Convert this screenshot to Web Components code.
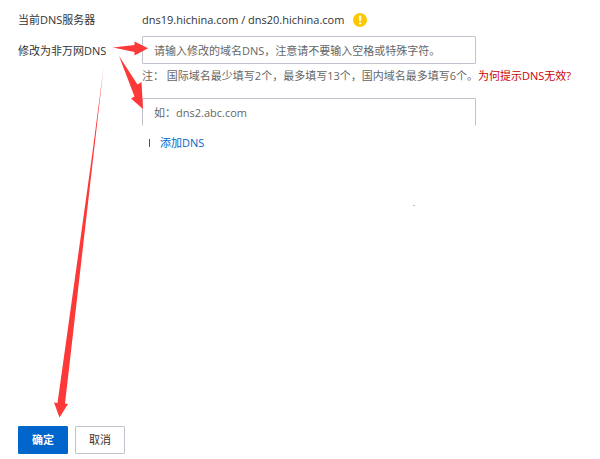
<!DOCTYPE html>
<html lang="zh-CN">
<head>
<meta charset="utf-8">
<title>修改DNS</title>
<style>
  body { margin: 0; background: #fff; color: #333; font: 11px/16px "Open Sans", "Noto Sans CJK SC", sans-serif; }
</style>
</head>
<body>
<dns-form>
  <form-row label="当前DNS服务器">
    <server-names>dns19.hichina.com / dns20.hichina.com</server-names>
  </form-row>
  <form-row label="修改为非万网DNS" boxed>
    <dns-input name="修改为非万网DNS" hint="请输入修改的域名DNS，注意请不要输入空格或特殊字符。"></dns-input>
    <form-note>注： 国际域名最少填写2个，最多填写13个，国内域名最多填写6个。</form-note>
    <dns-input name="DNS 2" hint="如：dns2.abc.com" open-bottom></dns-input>
    <add-link>添加DNS</add-link>
  </form-row>
  <action-button slot="actions" primary>确定</action-button>
  <action-button slot="actions">取消</action-button>
</dns-form>
<script>
const define = (name, html, setup) => customElements.define(name, class extends HTMLElement {
  connectedCallback() {
    if (this.shadowRoot) return;
    const t = document.createElement('template');
    t.innerHTML = html;
    this.attachShadow({ mode: 'open' }).append(t.content.cloneNode(true));
    if (setup) setup(this, this.shadowRoot);
  }
});

define('dns-form', `
<style>
  :host { display: flex; flex-direction: column; position: relative; min-height: 100vh; box-sizing: border-box; padding: 12px 18px 5px; }
  .rows { display: flex; flex-direction: column; gap: 8px; flex: 1; }
  .actions { display: flex; gap: 7px; }
</style>
<div class="rows"><slot></slot></div>
<div class="actions"><slot name="actions"></slot></div>
<arrow-marks></arrow-marks>`);

define('form-row', `
<style>
  :host { display: grid; grid-template-columns: 124px minmax(0, 1fr); }
  .label { color: #333; }
  :host([boxed]) .label { line-height: 30px; }
</style>
<div class="label"></div>
<div><slot></slot></div>`, (el, root) => {
  root.querySelector('.label').textContent = el.getAttribute('label');
});

define('server-names', `
<style>
  :host { display: flex; align-items: center; gap: 9px; }
  span { white-space: nowrap; }
</style>
<span><slot></slot></span>
<svg width="14" height="14" viewBox="0 0 14 14" aria-hidden="true">
  <circle cx="7" cy="7" r="7" fill="#fdc800"/>
  <path d="M6 2.5h2.2v5.6H6zM6 9.4h2.2v1.8H6z" fill="#fff"/>
</svg>`);

define('dns-input', `
<style>
  :host { display: block; }
  input { display: block; width: 100%; max-width: 334px; height: 28px; box-sizing: border-box; margin: 0; padding: 0 11px; border: 1px solid #c0c4cc; border-radius: 1px; background: #fff; color: #333; font: inherit; outline: 0; }
  :host([open-bottom]) input { border-bottom-color: transparent; }
  input::placeholder { color: #666; opacity: 1; }
</style>
<input type="text">`, (el, root) => {
  const input = root.querySelector('input');
  input.placeholder = el.getAttribute('hint');
  input.setAttribute('aria-label', el.getAttribute('name'));
});

define('form-note', `
<style>
  :host { display: block; padding: 4px 0 14px; color: #666; white-space: nowrap; }
  a { color: #c00; text-decoration: none; }
</style>
<slot></slot><a href="#">为何提示DNS无效?</a>`);

define('add-link', `
<style>
  :host { display: block; padding: 9px 0 0 7px; }
  a { display: inline-flex; align-items: center; gap: 10px; color: #06c; text-decoration: none; }
  i { width: 1px; height: 8px; background: #06c; }
</style>
<a href="#"><i></i><span><slot></slot></span></a>`);

define('action-button', `
<style>
  :host { display: block; }
  button { display: block; min-width: 50px; height: 28px; padding: 0 10px; border: 1px solid #c0c4cc; border-radius: 1px; background: #fff; color: #333; font: inherit; }
  :host([primary]) button { border-color: #06c; background: #06c; color: #fff; font-weight: bold; }
</style>
<button type="button"><slot></slot></button>`);

define('arrow-marks', `
<style>
  :host { position: absolute; left: 0; top: 0; pointer-events: none; }
  svg { display: block; }
</style>
<svg width="600" height="459" viewBox="0 0 600 459" fill="#fd3838" aria-hidden="true">
  <path d="M113 47.4L134.500 45V41.500L148 48.300L134.500 55.500V52Z"/>
  <path d="M119 56L137.500 84.500L141.500 82L143 109L131 98.500L134.500 96.500Z"/>
  <path d="M103.500 68L65 403.500L68 404L59.500 417.500L54 402.500L57.500 403L92 156Z"/>
  <path d="M413 205h2v1h-2z" fill="#bbb"/>
</svg>`);
</script>
</body>
</html>
